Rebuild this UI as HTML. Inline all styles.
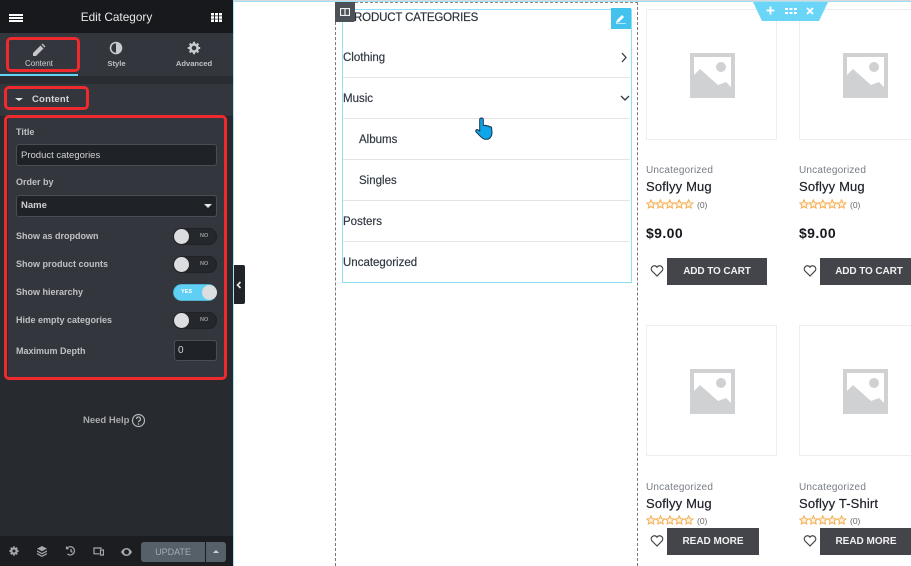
<!DOCTYPE html>
<html><head><meta charset="utf-8"><style>
html,body{margin:0;padding:0;background:#fff}
#p{position:relative;width:911px;height:566px;overflow:hidden;background:#fff;font-family:"Liberation Sans",sans-serif}
#p div,#p span,#p svg{position:absolute}
.t{white-space:nowrap;line-height:14px}
.l{color:#bfc1c3;font-size:9px;font-weight:bold;left:16px}
.in{background:#1f2226;border:1px solid #4a4e54;border-radius:3px;box-sizing:border-box}
.red{border:3px solid #ee2a2e;border-radius:5px;box-sizing:border-box}
.tg{left:173px;width:44px;height:17px;border-radius:9px;background:#24272b;box-shadow:inset 0 0 1px #111}
.kn{left:1px;top:1px;width:15px;height:15px;border-radius:50%;background:#dcdddf}
.no{left:27px;top:2px;font-size:5.5px;line-height:13px;color:#999;font-weight:bold}
.c{color:#333a44;font-size:11.5px;letter-spacing:0;-webkit-text-stroke:.2px #333a44}
.h{height:1px;left:343px;width:287px;background:#e4e4e4}
.img{width:131px;height:131px;box-sizing:border-box;border:1px solid #eee;background:#fff}
.cat{color:#777d85;font-size:10px;letter-spacing:.2px}
.nm{color:#1d2128;font-size:13px;letter-spacing:.15px;-webkit-text-stroke:.2px #1d2128}
.n0{color:#666;font-size:8.5px}
.pr{color:#16181d;font-size:14px;font-weight:bold;letter-spacing:.4px}
.b{background:#44454b;color:#f1f1f1;font-size:10px;font-weight:bold;text-align:center}
</style></head><body><div id="p">

<div style="left:0;top:0;width:233px;height:566px;background:#272a2f"></div>
<div style="left:0;top:0;width:233px;height:33px;background:#17191c"></div>
<div style="left:0;top:33px;width:233px;height:43px;background:#33363d"></div>
<div style="left:0;top:74px;width:78px;height:2px;background:#66d4f4"></div>
<div style="left:0;top:76px;width:233px;height:8px;background:#292c31"></div>
<div style="left:0;top:84px;width:233px;height:32px;background:#33363d"></div>
<div style="left:8px;top:116px;width:217px;height:262px;background:#33363d"></div>
<div style="left:0;top:116px;width:233px;height:1px;background:#24272b"></div>

<div style="left:9px;top:14px;width:14px;height:2px;background:#fff"></div>
<div style="left:9px;top:17px;width:14px;height:2px;background:#fff"></div>
<div style="left:9px;top:20px;width:14px;height:2px;background:#fff"></div>
<div class="t" style="left:0;width:233px;top:10px;text-align:center;color:#e8e8e8;font-size:11.8px;">Edit Category</div>
<svg style="left:211px;top:13px" width="11" height="9"><path fill="#fff" d="M0 0h3v2.500H0zM4 0h3v2.500H4zM8 0h3v2.500H8zM0 3.200h3v2.500H0zM4 3.200h3v2.500H4zM8 3.200h3v2.500H8zM0 6.400h3V9H0zM4 6.400h3V9H4zM8 6.400h3V9H8z"/></svg>

<svg style="left:32px;top:43px" width="14" height="14" viewBox="0 0 14 14"><path fill="#c4c6c8" d="M1 10l7.500-7.500 3 3L4 13H1zM9.500 1.500l1-1 3 3-1 1z"/></svg>
<div class="t" style="left:0;width:78px;text-align:center;top:57px;color:#d0d1d3;font-size:8px;">Content</div>
<svg style="left:109px;top:41px" width="14" height="14" viewBox="0 0 14 14"><circle cx="7" cy="7" r="5.500" fill="none" stroke="#c8cacc" stroke-width="1.600"/><path fill="#c8cacc" d="M7 1.500a5.500 5.500 0 0 1 0 11z"/></svg>
<div class="t" style="left:78px;width:77px;text-align:center;top:57px;color:#c0c2c4;font-size:7.6px;font-weight:bold">Style</div>
<svg style="left:187px;top:41px" width="14" height="14" viewBox="0 0 14 14"><circle cx="7" cy="7" r="3.600" fill="none" stroke="#c8cacc" stroke-width="2.600"/><path stroke="#c8cacc" stroke-width="2" d="M7 .8v2.400M7 10.800v2.400M.8 7h2.400M10.800 7h2.400M2.600 2.600l1.700 1.700M9.700 9.700l1.700 1.700M2.600 11.400l1.700-1.700M9.700 4.300l1.700-1.700"/></svg>
<div class="t" style="left:155px;width:78px;text-align:center;top:57px;color:#c0c2c4;font-size:7.6px;font-weight:bold">Advanced</div>

<div class="red" style="left:6px;top:37px;width:74px;height:35px"></div>
<div class="red" style="left:4px;top:86px;width:85px;height:24px"></div>
<div class="red" style="left:4px;top:115px;width:223px;height:265px"></div>

<div style="left:15px;top:98px;width:0;height:0;border-left:4px solid transparent;border-right:4px solid transparent;border-top:3.500px solid #e5e5e5"></div>
<div class="t" style="left:32px;top:93px;color:#d4d5d7;font-size:9.500px;font-weight:bold;letter-spacing:.2px">Content</div>

<div class="t l" style="top:125px">Title</div>
<div class="in" style="left:16px;top:144px;width:201px;height:22px"></div>
<div class="t" style="left:21px;top:149px;color:#d0d1d3;font-size:9.500px;">Product categories</div>
<div class="t l" style="top:175px">Order by</div>
<div class="in" style="left:16px;top:195px;width:201px;height:22px"></div>
<div class="t" style="left:21px;top:199px;color:#d0d1d3;font-size:9.500px;font-weight:bold">Name</div>
<div style="left:204px;top:204px;width:0;height:0;border-left:4px solid transparent;border-right:4px solid transparent;border-top:4px solid #e5e5e5"></div>

<div class="t l" style="top:229px">Show as dropdown</div>
<div class="tg" style="top:228px"><div class="kn"></div><span class="no">NO</span></div>
<div class="t l" style="top:257px">Show product counts</div>
<div class="tg" style="top:256px"><div class="kn"></div><span class="no">NO</span></div>
<div class="t l" style="top:285px">Show hierarchy</div>
<div class="tg" style="top:284px;background:#5fd0f3"><div class="kn" style="left:29px"></div><span class="no" style="left:8px;color:#fff">YES</span></div>
<div class="t l" style="top:313px">Hide empty categories</div>
<div class="tg" style="top:312px"><div class="kn"></div><span class="no">NO</span></div>
<div class="t l" style="top:344px">Maximum Depth</div>
<div class="in" style="left:174px;top:340px;width:43px;height:21px"></div>
<div class="t" style="left:178px;top:344px;color:#d0d1d3;font-size:10px;">0</div>

<div class="t" style="left:83px;top:414px;color:#a9abae;font-size:9.500px;font-weight:bold;">Need Help</div>
<svg style="left:131px;top:413px" width="15" height="15" viewBox="0 0 15 15"><circle cx="7.500" cy="7.500" r="6" fill="none" stroke="#b5b7ba" stroke-width="1.200"/><path d="M5.500 6a2 2 0 1 1 3 1.700c-.7.400-1 .8-1 1.600" fill="none" stroke="#b5b7ba" stroke-width="1.200"/><circle cx="7.500" cy="11" r=".8" fill="#b5b7ba"/></svg>

<div style="left:0;top:536px;width:233px;height:30px;background:#1b1d20"></div>
<svg style="left:9px;top:546px" width="10" height="10" viewBox="0 0 14 14"><circle cx="7" cy="7" r="3.600" fill="none" stroke="#a5a8ac" stroke-width="3"/><path stroke="#a5a8ac" stroke-width="2.400" d="M7 .5v3M7 10.500v3M.5 7h3M10.500 7h3M2.400 2.400l2 2M9.600 9.600l2 2M2.400 11.600l2-2M9.600 4.400l2-2"/></svg>
<svg style="left:37px;top:546px" width="10" height="11" viewBox="0 0 10 11"><path fill="#a5a8ac" d="M5 0l5 2.600L5 5.200 0 2.600zM0 4.400l5 2.600 5-2.600v1.400L5 8.400 0 5.800zM0 7l5 2.600L10 7v1.400L5 11 0 8.400z"/></svg>
<svg style="left:65px;top:546px" width="11" height="10" viewBox="0 0 11 10"><path fill="none" stroke="#a5a8ac" stroke-width="1.200" d="M2 2.200A4.200 4.200 0 1 1 2.500 8M1.500 .5v2.200h2.200M6 3v2.400l1.500 1"/></svg>
<svg style="left:93px;top:547px" width="11" height="9" viewBox="0 0 11 9"><path fill="none" stroke="#a5a8ac" stroke-width="1.200" d="M1 6.500V1h7v1M.5 6.800h6M7.500 3h3v5h-3z"/></svg>
<svg style="left:121px;top:548px" width="11" height="8" viewBox="0 0 11 8"><path fill="#a5a8ac" d="M5.500 0C3 0 1 2 0 4c1 2 3 4 5.500 4S10 6 11 4C10 2 8 0 5.500 0zm0 6.500a2.500 2.500 0 1 1 0-5 2.500 2.500 0 0 1 0 5z"/></svg>
<div style="left:141px;top:542px;width:64px;height:20px;background:#556068;border-radius:3px 0 0 3px"></div>
<div class="t" style="left:141px;width:64px;text-align:center;top:545px;color:#a6acb0;font-size:9px;">UPDATE</div>
<div style="left:206px;top:542px;width:20px;height:20px;background:#556068;border-radius:0 3px 3px 0"></div>
<div style="left:213px;top:550px;width:0;height:0;border-left:3px solid transparent;border-right:3px solid transparent;border-bottom:3px solid #d0d3d5"></div>

<div style="left:233px;top:265px;width:12px;height:39px;background:#202327;border-radius:0 2px 2px 0"></div>
<svg style="left:236px;top:281px" width="6" height="8"><path d="M4.500 1L1.500 4l3 3" fill="none" stroke="#e8e8e8" stroke-width="1.600"/></svg>

<div style="left:233px;top:0;width:1px;height:566px;background:#a8e4f8"></div>
<div style="left:233px;top:1px;width:678px;height:1px;background:#9fe0f6"></div>
<div style="left:233px;top:0;width:678px;height:1px;background:#d8d8d8"></div>

<div style="left:335px;top:2px;width:0;height:564px;border-left:1px dashed #777"></div>
<div style="left:637px;top:2px;width:0;height:564px;border-left:1px dashed #777"></div>
<div style="left:335px;top:2px;width:303px;height:0;border-top:1px dashed #888"></div>

<div style="left:342px;top:9px;width:290px;height:274px;box-sizing:border-box;border:1px solid #8fdff8"></div>
<div class="t c" style="left:354px;top:11px;color:#2a2f38;letter-spacing:-.15px">RODUCT CATEGORIES</div>
<div style="left:335px;top:2px;width:20px;height:20px;background:#4c5157;border-radius:0 0 2px 0"></div>
<svg style="left:340px;top:8px" width="10" height="8"><path d="M.5.500h9v7h-9zM5 .500v7" fill="none" stroke="#f0f0f0" stroke-width="1.200"/></svg>
<div style="left:611px;top:8px;width:20px;height:21px;background:#43c2ee"></div>
<svg style="left:616px;top:14px" width="11" height="10" viewBox="0 0 11 10"><path fill="#fff" d="M0 9l1-3 5-5 2 2-5 5zM0 9.400h10V10H0z"/></svg>

<div class="t c" style="left:343px;top:51px">Clothing</div>
<svg style="left:620px;top:52px" width="9" height="11"><path d="M2 1l4 4.500-4 4.500" fill="none" stroke="#333a44" stroke-width="1.300"/></svg>
<div class="h" style="top:77px"></div>
<div class="t c" style="left:343px;top:92px">Music</div>
<svg style="left:620px;top:94px" width="11" height="8"><path d="M1 2l4 4 4-4" fill="none" stroke="#333a44" stroke-width="1.300"/></svg>
<div class="h" style="top:118px"></div>
<div class="t c" style="left:359px;top:133px">Albums</div>
<div class="h" style="top:159px"></div>
<div class="t c" style="left:359px;top:174px">Singles</div>
<div class="h" style="top:200px"></div>
<div class="t c" style="left:343px;top:215px">Posters</div>
<div class="h" style="top:241px"></div>
<div class="t c" style="left:343px;top:256px">Uncategorized</div>

<svg style="left:475px;top:117px" width="19" height="24" viewBox="0 0 19 24"><path fill="#0fa5e8" stroke="#13324a" stroke-width="1" d="M6.500 1c1.200 0 1.800.7 1.800 1.700V8.500l1.200.1c.8-.6 2-.4 2.300.5 1-.6 2.100-.2 2.400.7 1-.4 2.200 0 2.400 1l.4 4.700c0 3-1.500 5.800-3.800 6.700H9.500C7 21.500 4.500 18.500 1 14.800c-.9-1.200.4-2.800 1.900-2l1.800 1.200V2.700C4.700 1.700 5.500 1 6.500 1z"/></svg>

<div class="img" style="left:646px;top:9px"></div>
<div class="img" style="left:799px;top:9px"></div>
<div class="img" style="left:646px;top:325px"></div>
<div class="img" style="left:799px;top:325px"></div>
<svg style="left:690px;top:53px" width="45" height="45" viewBox="0 0 45 45"><path fill="#d0d1d3" d="M0 0h45v45H0z"/><path fill="#fff" d="M4 4h37v30l-5-5-8 3-18-16-6 6z"/><circle cx="31" cy="14" r="5" fill="#d0d1d3"/></svg>
<svg style="left:843px;top:53px" width="45" height="45" viewBox="0 0 45 45"><path fill="#d0d1d3" d="M0 0h45v45H0z"/><path fill="#fff" d="M4 4h37v30l-5-5-8 3-18-16-6 6z"/><circle cx="31" cy="14" r="5" fill="#d0d1d3"/></svg>
<svg style="left:690px;top:369px" width="45" height="45" viewBox="0 0 45 45"><path fill="#d0d1d3" d="M0 0h45v45H0z"/><path fill="#fff" d="M4 4h37v30l-5-5-8 3-18-16-6 6z"/><circle cx="31" cy="14" r="5" fill="#d0d1d3"/></svg>
<svg style="left:843px;top:369px" width="45" height="45" viewBox="0 0 45 45"><path fill="#d0d1d3" d="M0 0h45v45H0z"/><path fill="#fff" d="M4 4h37v30l-5-5-8 3-18-16-6 6z"/><circle cx="31" cy="14" r="5" fill="#d0d1d3"/></svg>

<div style="left:753px;top:2px;width:75px;height:19px;background:#6bd5f7;clip-path:polygon(0 0,100% 0,88% 100%,12% 100%)"></div>
<svg style="left:766px;top:6px" width="9" height="9"><path d="M4.500 .5v8M.5 4.500h8" stroke="#fff" stroke-width="1.800"/></svg>
<svg style="left:785px;top:8px" width="12" height="6"><path fill="#fff" d="M0 0h3v2H0zM4.500 0h3v2h-3zM9 0h3v2H9zM0 4h3v2H0zM4.500 4h3v2h-3zM9 4h3v2H9z"/></svg>
<svg style="left:806px;top:7px" width="8" height="8"><path d="M1 1l6 6M7 1L1 7" stroke="#fff" stroke-width="1.800"/></svg>

<div class="t cat" style="left:646px;top:164px">Uncategorized</div>
<div class="t nm" style="left:646px;top:180px">Soflyy Mug</div>
<svg style="left:646px;top:199px" width="48" height="10"><path fill="#fff3dd" stroke="#f5ae55" stroke-width="1" d="M5 .8l1.300 2.900 3 .3-2.300 2 .7 3L5 7.400 2.300 9l.7-3L.7 4l3-.3zm9.400 0l1.300 2.900 3 .3-2.300 2 .7 3-2.700-1.600L11.700 9l.7-3-2.300-2 3-.3zm9.400 0l1.300 2.900 3 .3-2.300 2 .7 3-2.700-1.600L21.100 9l.7-3-2.300-2 3-.3zm9.400 0l1.300 2.900 3 .3-2.300 2 .7 3-2.700-1.600L30.500 9l.7-3-2.300-2 3-.3zm9.400 0l1.300 2.900 3 .3-2.300 2 .7 3-2.700-1.600L39.900 9l.7-3-2.300-2 3-.3z"/></svg>
<div class="t n0" style="left:697px;top:198px">(0)</div>
<div class="t pr" style="left:646px;top:226px">$9.00</div>
<svg style="left:650px;top:264px" width="14" height="13" viewBox="0 0 14 13"><path d="M7 12L1.800 6.800C-.5 3.500 4.500-.5 7 3.200 9.500-.5 14.500 3.500 12.200 6.800z" fill="none" stroke="#444" stroke-width="1.200"/></svg>
<div class="b" style="left:667px;top:258px;width:100px;height:27px;line-height:28px;letter-spacing:-.1px">ADD TO CART</div>

<div class="t cat" style="left:799px;top:164px">Uncategorized</div>
<div class="t nm" style="left:799px;top:180px">Soflyy Mug</div>
<svg style="left:799px;top:199px" width="48" height="10"><path fill="#fff3dd" stroke="#f5ae55" stroke-width="1" d="M5 .8l1.300 2.900 3 .3-2.300 2 .7 3L5 7.400 2.300 9l.7-3L.7 4l3-.3zm9.400 0l1.300 2.900 3 .3-2.300 2 .7 3-2.700-1.600L11.700 9l.7-3-2.300-2 3-.3zm9.400 0l1.300 2.900 3 .3-2.300 2 .7 3-2.700-1.600L21.100 9l.7-3-2.300-2 3-.3zm9.400 0l1.300 2.900 3 .3-2.300 2 .7 3-2.700-1.600L30.500 9l.7-3-2.300-2 3-.3zm9.400 0l1.300 2.900 3 .3-2.300 2 .7 3-2.700-1.600L39.900 9l.7-3-2.300-2 3-.3z"/></svg>
<div class="t n0" style="left:850px;top:198px">(0)</div>
<div class="t pr" style="left:799px;top:226px">$9.00</div>
<svg style="left:803px;top:264px" width="14" height="13" viewBox="0 0 14 13"><path d="M7 12L1.800 6.800C-.5 3.500 4.500-.5 7 3.200 9.500-.5 14.500 3.500 12.200 6.800z" fill="none" stroke="#444" stroke-width="1.200"/></svg>
<div class="b" style="left:820px;top:258px;width:98px;height:27px;line-height:28px;letter-spacing:-.1px">ADD TO CART</div>

<div class="t cat" style="left:646px;top:481px">Uncategorized</div>
<div class="t nm" style="left:646px;top:497px">Soflyy Mug</div>
<svg style="left:646px;top:515px" width="48" height="10"><path fill="#fff3dd" stroke="#f5ae55" stroke-width="1" d="M5 .8l1.300 2.900 3 .3-2.300 2 .7 3L5 7.400 2.300 9l.7-3L.7 4l3-.3zm9.400 0l1.300 2.900 3 .3-2.300 2 .7 3-2.700-1.600L11.700 9l.7-3-2.300-2 3-.3zm9.400 0l1.300 2.900 3 .3-2.300 2 .7 3-2.700-1.600L21.100 9l.7-3-2.300-2 3-.3zm9.400 0l1.300 2.900 3 .3-2.300 2 .7 3-2.700-1.600L30.500 9l.7-3-2.300-2 3-.3zm9.400 0l1.300 2.900 3 .3-2.300 2 .7 3-2.700-1.600L39.900 9l.7-3-2.300-2 3-.3z"/></svg>
<div class="t n0" style="left:697px;top:514px">(0)</div>
<svg style="left:650px;top:534px" width="14" height="13" viewBox="0 0 14 13"><path d="M7 12L1.800 6.800C-.5 3.500 4.500-.5 7 3.200 9.500-.5 14.500 3.500 12.200 6.800z" fill="none" stroke="#444" stroke-width="1.200"/></svg>
<div class="b" style="left:667px;top:528px;width:92px;height:27px;line-height:28px">READ MORE</div>

<div class="t cat" style="left:799px;top:481px">Uncategorized</div>
<div class="t nm" style="left:799px;top:497px">Soflyy T-Shirt</div>
<svg style="left:799px;top:515px" width="48" height="10"><path fill="#fff3dd" stroke="#f5ae55" stroke-width="1" d="M5 .8l1.300 2.900 3 .3-2.300 2 .7 3L5 7.400 2.300 9l.7-3L.7 4l3-.3zm9.400 0l1.300 2.900 3 .3-2.300 2 .7 3-2.700-1.600L11.700 9l.7-3-2.300-2 3-.3zm9.400 0l1.300 2.900 3 .3-2.300 2 .7 3-2.700-1.600L21.100 9l.7-3-2.300-2 3-.3zm9.400 0l1.300 2.900 3 .3-2.300 2 .7 3-2.700-1.600L30.500 9l.7-3-2.300-2 3-.3zm9.400 0l1.300 2.900 3 .3-2.300 2 .7 3-2.700-1.600L39.900 9l.7-3-2.300-2 3-.3z"/></svg>
<div class="t n0" style="left:850px;top:514px">(0)</div>
<svg style="left:803px;top:534px" width="14" height="13" viewBox="0 0 14 13"><path d="M7 12L1.800 6.800C-.5 3.500 4.500-.5 7 3.200 9.500-.5 14.500 3.500 12.200 6.800z" fill="none" stroke="#444" stroke-width="1.200"/></svg>
<div class="b" style="left:820px;top:528px;width:92px;height:27px;line-height:28px">READ MORE</div>

</div></body></html>
